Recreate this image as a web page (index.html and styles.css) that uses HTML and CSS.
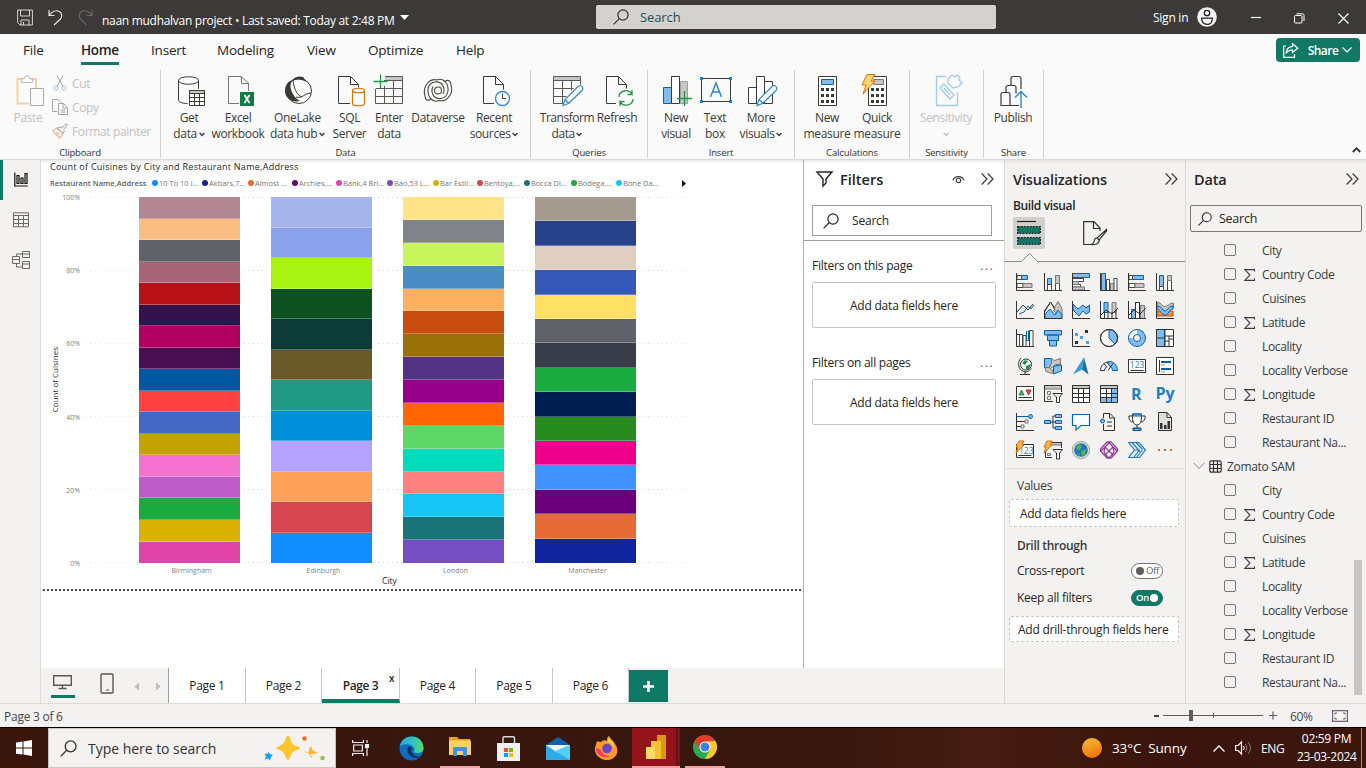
FILE: index.html
```html
<!DOCTYPE html>
<html lang="en">
<head>
<meta charset="utf-8">
<title>naan mudhalvan project</title>
<link rel="stylesheet" href="styles.css">
</head>
<body>
<svg class="defs" width="0" height="0">
  <symbol id="cb" viewBox="0 0 12 12"><rect x=".5" y=".5" width="11" height="11" rx="1.5" fill="none" stroke="#797775"/></symbol>
  <symbol id="sg" viewBox="0 0 11 12"><path d="M10.500 2.500V.6H.8L6 6 .8 11.400h9.700V9.500" fill="none" stroke="#3b3a39" stroke-width="1.100"/></symbol>
  <symbol id="dd" viewBox="0 0 6 5"><path d="M.6 1l2.400 2.500L5.400 1" fill="none" stroke="currentColor" stroke-width="1.400"/></symbol>
  <symbol id="mag" viewBox="0 0 16 16"><circle cx="10" cy="6" r="5.100" fill="none" stroke="currentColor" stroke-width="1.200"/><path d="M6.300 9.700L.6 15.400" stroke="currentColor" stroke-width="1.200"/></symbol>
  <symbol id="chev" viewBox="0 0 13 12"><path d="M.7.500L6 6 .7 11.500M6.700.500L12 6l-5.300 5.500" fill="none" stroke="#3b3a39" stroke-width="1.200"/></symbol>
</svg>

<header class="titlebar">
  <div class="quick">
    <svg width="16" height="17" viewBox="0 0 16 17" fill="none" stroke="#d6d5d4"><path d="M.6 1h14.800v15H3L.6 13.600zM3.500 1v6h9V1M4 16v-5h8v5M6.500 13v3"/></svg>
    <svg width="15" height="17" viewBox="0 0 15 17" fill="none" stroke="#e6e5e4" stroke-width="1.200"><path d="M1 1v5.500h5.500M1.300 6.200C4 2.500 8 .8 11 2.300c3.500 2 3.500 5.500 1.200 8L6 16"/></svg>
    <svg width="15" height="17" viewBox="0 0 15 17" fill="none" stroke="#6a6967" stroke-width="1.200"><path d="M14 1v5.500H8.500M13.700 6.200C11 2.500 7 .8 4 2.300c-3.500 2-3.500 5.500-1.200 8L8.500 16"/></svg>
  </div>
  <div class="doc">naan mudhalvan project • Last saved: Today at 2:48 PM</div>
  <svg class="doc-arrow" width="9" height="5"><path d="M0 0h9L4.500 5z" fill="#fff"/></svg>
  <div class="topsearch"><svg width="16" height="16"><use href="#mag"/></svg><span>Search</span></div>
  <div class="account"><span>Sign in</span>
    <svg width="20" height="20" viewBox="0 0 20 20"><circle cx="10" cy="10" r="9.800" fill="#f6f6f6"/><circle cx="10" cy="6" r="2.700" fill="none" stroke="#222" stroke-width="1.300"/><path d="M4.700 11.200h10.600c0 4-2 6.200-5.300 6.200s-5.300-2.200-5.300-6.200z" fill="none" stroke="#222" stroke-width="1.300"/></svg>
  </div>
  <div class="winbtns">
    <svg width="10" height="10"><path d="M0 4.500h10" stroke="#fff" stroke-width="1.200"/></svg>
    <svg width="11" height="11" fill="none" stroke="#fff"><path d="M.5 3.500q0-1 1-1H7q1 0 1 1V9q0 1-1 1H1.500q-1 0-1-1zM2.500.8H8.500Q10 .8 10 2.500V8"/></svg>
    <svg width="11" height="11"><path d="M.5.500l10 10M10.500.500l-10 10" stroke="#fff" stroke-width="1.200"/></svg>
  </div>
</header>

<nav class="menu">
  <span class="m-file">File</span><span class="m-home">Home</span><span class="m-insert">Insert</span><span class="m-model">Modeling</span><span class="m-view">View</span><span class="m-opt">Optimize</span><span class="m-help">Help</span>
  <button class="share"><svg width="16" height="15" viewBox="0 0 16 15" fill="none" stroke="#fff" stroke-width="1.200"><path d="M3 3H.7v11.300h10.800V11M9.500.8l5.300 4.400-5.300 4.300V7.200C6.500 7 4.500 8 3 10.500 3.200 6.500 5.500 3.700 9.500 3.300z"/></svg><span>Share</span><svg width="10" height="6"><path d="M.5.500L5 5 9.500.500" fill="none" stroke="#fff" stroke-width="1.200"/></svg></button>
</nav>

<section class="ribbon">
  <div class="group g-clip">
    <div class="items">
      <div class="rb w56 off"><svg width="36" height="36" viewBox="0 0 36 36" fill="none"><path d="M13 5H7.500v24.500H19M21 5h5v9" stroke="#f3d3a5" stroke-width="2"/><path d="M11.500 8.500V4.500h3q0-3 2.500-3t2.500 3h3v4z" stroke="#bbb"/><path d="M20.500 14.500h13v17h-13z" stroke="#aaa" fill="#fafafa"/></svg><b>Paste</b></div>
      <div class="cliplist off">
        <div><svg width="16" height="16" viewBox="0 0 16 16" fill="none" stroke="#a5a5a5"><path d="M5 .5l6 11M11 .5l-6 11"/><circle cx="4" cy="13" r="2" stroke="#9ac6e2"/><circle cx="12" cy="13" r="2" stroke="#9ac6e2"/></svg>Cut</div>
        <div><svg width="16" height="16" viewBox="0 0 16 16" fill="none" stroke="#a5a5a5"><path d="M5 12.500H.5V.5H6l3 3M6.500 4.500h5l4 4v7h-9zM11 4.500V9h4.500M8.500 11h5M8.500 13h5"/></svg>Copy</div>
        <div><svg width="16" height="16" viewBox="0 0 16 16" fill="none"><path d="M.8 8l7 7 3.200-4.500-6-5.500zM4 10l4 1" stroke="#efc0a0" stroke-width="1.500"/><path d="M5 5.500L8 4l2 1 4-4.500L15.500 2 11.500 6.500l1 1.500-1.500 2z" stroke="#a5a5a5"/></svg>Format painter</div>
      </div>
    </div>
    <div class="gname">Clipboard</div>
  </div>
  <div class="group g-data">
    <div class="items">
      <div class="rb w46"><svg width="36" height="36" viewBox="0 0 36 36" fill="none" stroke="#3b3a39"><path d="M27.500 15V6.500M7.500 6.500V26c0 2 4 3.500 9 3.500M7.500 6.500c0-5 20-5 20 0s-20 5-20 0z"/><path d="M18.500 16.500h15v15h-15z" fill="#fff"/><path d="M18.500 16.500h15v3h-15z" fill="#c8c6c4"/><path d="M23.500 19.500v12M28.500 19.500v12M18.500 23.500h15M18.500 27.500h15"/></svg><b>Get<br>data <svg class="dd"><use href="#dd"/></svg></b></div>
      <div class="rb w52"><svg width="36" height="36" viewBox="0 0 36 36" fill="none"><path d="M19 29.500H8.500v-27H21L28.500 9v8M21.500 2.500V9.500h7" stroke="#797775"/><path d="M20 18h14v14H20z" fill="#107c41"/><path d="M24.500 21l5 8M29.500 21l-5 8" stroke="#fff" stroke-width="1.800"/></svg><b>Excel<br>workbook</b></div>
      <div class="rb w67"><svg width="36" height="36" viewBox="0 0 36 36"><circle cx="19" cy="17" r="12.500" fill="#fafafa" stroke="#3b3a39"/><path d="M13 6C10 9 10 13 11.500 17s5 8.500 8.500 10C12 29 5 24 5 17 5 11 8 7 13 6zM12 6Q17 1 23 3l4 5q-8-4.500-15-1z" fill="#3b3a39"/><path d="M13 6c1 10 5 16 9 17M16 23c6 2 9-4 15-4" fill="none" stroke="#3b3a39"/></svg><b>OneLake<br>data hub <svg class="dd"><use href="#dd"/></svg></b></div>
      <div class="rb w37"><svg width="36" height="36" viewBox="0 0 36 36" fill="none"><path d="M18 29.500H6.500v-27h12l8 8v3M18.500 2.500v8h8" stroke="#3b3a39"/><path d="M20.500 16.500v13c0 3 12 3 12 0v-13c0-3-12-3-12 0zc0 3 12 3 12 0" stroke="#d9730d" stroke-width="1.200"/></svg><b>SQL<br>Server</b></div>
      <div class="rb w42"><svg width="36" height="36" viewBox="0 0 36 36" fill="none"><path d="M14 2.500h17.500v4H14z" fill="#c8c6c4"/><path d="M14 2.500h17.500v27h-27V15M13 6.500h18.500M5 14.500h26.500M5 22.500h26.500M13.500 12v17.500M22.500 6.500v23" stroke="#5a5856"/><path d="M9.500.5v14M2.500 7.500h14" stroke="#1a9b45" stroke-width="1.300"/></svg><b>Enter<br>data</b></div>
      <div class="rb w56"><svg width="36" height="36" viewBox="0 0 36 36" fill="none" stroke="#4a4846" stroke-width="1.100"><path d="M5 22C2 12 10 4 17 6M31 11c3 10-5 17-12 15.500M5 22c0 4 3 5.500 6 3C6 19 7 9 15 8c7-1 11 6 8 12M31 11c0-4-3-6-6-3.500C30 13 29 23 21 24.500c-7 1-11-6-8-12M17 6q4-2 8 1.500M19 26.500q-4 2-8-1.500"/><circle cx="18" cy="16.500" r="3.500"/></svg><b>Dataverse</b></div>
      <div class="rb w56"><svg width="36" height="36" viewBox="0 0 36 36" fill="none"><path d="M18 29.500H7.500v-27h12l8 8v5M19.500 2.500v8h8" stroke="#3b3a39"/><circle cx="26.500" cy="24.500" r="7" fill="#fff" stroke="#2b88d8" stroke-width="1.300"/><path d="M26.500 19.500v5H30" stroke="#3b3a39"/></svg><b>Recent<br>sources <svg class="dd"><use href="#dd"/></svg></b></div>
    </div>
    <div class="gname">Data</div>
  </div>
  <div class="group g-quer">
    <div class="items">
      <div class="rb w62"><svg width="36" height="36" viewBox="0 0 36 36" fill="none"><path d="M4.500 2.500h27v4h-27z" fill="#c8c6c4"/><path d="M14 29.500H4.500v-27h27v8M4.500 6.500h27M4.500 14.500h20M4.500 22.500h13M13.500 6.500v23M22.500 6.500v10" stroke="#5a5856"/><path d="M14 31.500l2-6L29 12.500q2.500-2 4 0t0 4L19.500 29.500zM16 25.500l4 4" fill="#fff" stroke="#2b88d8" stroke-width="1.200"/></svg><b>Transform<br>data <svg class="dd"><use href="#dd"/></svg></b></div>
      <div class="rb w38"><svg width="36" height="36" viewBox="0 0 36 36" fill="none"><path d="M17 29.500H7.500v-27h12l8 8v4M19.500 2.500v8h8" stroke="#3b3a39"/><path d="M20 23c0-6 9-9 13-3v-4M33 20.500h-4.500M34 25c0 6-9 8.500-13 3v4M21 27.500h4.500" stroke="#2a9248" stroke-width="1.300"/></svg><b>Refresh</b></div>
    </div>
    <div class="gname">Queries</div>
  </div>
  <div class="group g-ins">
    <div class="items">
      <div class="rb w42"><svg width="36" height="36" viewBox="0 0 36 36"><path d="M22.500 7.500h7v22h-7z" fill="#c8c6c4" stroke="#a19f9d"/><path d="M5.500 13.500h8v16h-8z" fill="#83bbec" stroke="#0063b1"/><path d="M13.500 2.500h8v27h-8z" fill="#fff" stroke="#3b3a39"/><path d="M26.500 17v15M19 24.500h15" stroke="#1a9b45" stroke-width="1.400"/></svg><b>New<br>visual</b></div>
      <div class="rb w36"><svg width="36" height="36" viewBox="0 0 36 36"><path d="M4.500 4.500h29v23h-29z" fill="none" stroke="#3b3a39"/><path d="M3 3h3v3H3zM32 3h3v3h-3zM3 26h3v3H3zM32 26h3v3h-3z" fill="#0f7fd0"/><path d="M13.500 23L19 9l5.500 14M15.500 18h7" fill="none" stroke="#2b88d8" stroke-width="1.500"/></svg><b>Text<br>box</b></div>
      <div class="rb w56"><svg width="36" height="36" viewBox="0 0 36 36" fill="#fff" stroke="#3b3a39"><path d="M5.500 13.500h8v16h-8zM21.500 7.500h8v22h-8zM13.500 2.500h8v27h-8z"/><path d="M14 31.500l2-6L29 12.500q2.500-2 4 0t0 4L19.500 29.500zM16 25.500l4 4" stroke="#2b88d8" stroke-width="1.200"/></svg><b>More<br>visuals <svg class="dd"><use href="#dd"/></svg></b></div>
    </div>
    <div class="gname">Insert</div>
  </div>
  <div class="group g-calc">
    <div class="items">
      <div class="rb w50"><svg width="36" height="36" viewBox="0 0 36 36"><path d="M9.500 2.500h18v29h-18z" fill="#fff" stroke="#3b3a39"/><path d="M12.500 5.500h12v5h-12z" fill="#83bbec" stroke="#0063b1"/><path d="M12 14h3v3h-3zm5 0h3v3h-3zm5 0h3v3h-3zm-10 6h3v3h-3zm5 0h3v3h-3zm5 0h3v3h-3zm-10 6h3v3h-3zm5 0h3v3h-3zm5 0h3v3h-3z" fill="#3b3a39"/></svg><b>New<br>measure</b></div>
      <div class="rb w50"><svg width="36" height="36" viewBox="0 0 36 36"><path d="M9.500 2.500h18v29h-18z" fill="#fff" stroke="#3b3a39"/><path d="M14.500 5.500h10v5h-10z" fill="#c8c6c4" stroke="#797775"/><path d="M12 14h3v3h-3zm5 0h3v3h-3zm5 0h3v3h-3zm-10 6h3v3h-3zm5 0h3v3h-3zm5 0h3v3h-3zm-10 6h3v3h-3zm5 0h3v3h-3zm5 0h3v3h-3z" fill="#3b3a39"/><path d="M8 .5h8L12 7h4L4 20l3-9H3z" fill="#fbd46b" stroke="#d9730d"/></svg><b>Quick<br>measure</b></div>
    </div>
    <div class="gname">Calculations</div>
  </div>
  <div class="group g-sens">
    <div class="items">
      <div class="rb w50 off"><svg width="36" height="36" viewBox="0 0 36 36" fill="none" stroke="#9fcdea" stroke-width="1.300"><path d="M18 2.500H8.500v29h21V18M12 14l4-4 10 11-4 4zM16 14l6 7M20 9l5 5 5-1 4-4-3-3 1-2-3-3-2 2-3-2-4 4z"/></svg><b>Sensitivity<br><svg class="dd"><use href="#dd"/></svg></b></div>
    </div>
    <div class="gname">Sensitivity</div>
  </div>
  <div class="group g-share">
    <div class="items">
      <div class="rb w50"><svg width="36" height="36" viewBox="0 0 36 36" fill="none" stroke="#3b3a39" stroke-width="1.200"><path d="M16 11V4.500q0-2 2-2h6q2 0 2 2V15M11 18.500v-5q0-2 2-2h6q2 0 2 2v6M6 31.500V20q0-1.500 2-1.500h5q2 0 2 1.500v11.500zM15 31.500h9"/><path d="M26 34V17.500M20 23.500l6-6 6 6" stroke="#2b88d8" stroke-width="1.400"/></svg><b>Publish</b></div>
    </div>
    <div class="gname">Share</div>
  </div>
  <svg class="collapse" width="9" height="6"><path d="M.8 5L4.500 1.200 8.200 5" fill="none" stroke="#323130" stroke-width="1.800"/></svg>
</section>

<main class="work">
  <aside class="rail">
    <div class="railbtn on"><svg width="14" height="16" viewBox="0 0 14 16" fill="none" stroke="#111" stroke-width="1.200"><path d="M.8.500V14H13.800M3 11.500V3.500H5V11.500zM7 11.500V6H9V11.500zM11 11.500V1.500H13V11.500z"/></svg></div>
    <div class="railbtn"><svg width="16" height="16" viewBox="0 0 16 16" fill="none" stroke="#6b6967"><path d="M.5.800h15v14H.5zM.5 3.500h15M.5 7.500h15M.5 11.500h15M5.500 3.500v11M10.500 3.500v11"/></svg></div>
    <div class="railbtn"><svg width="18" height="18" viewBox="0 0 18 18" fill="none" stroke="#6b6967"><path d="M.5 5.500h7v7h-7zM.5 8.500h7M10.500.500h7v6h-7zM10.500 3h7M10.500 10.500h7v7h-7zM10.500 13h7M4.500 5.500V3h6M4.500 12.500V16h6"/></svg></div>
  </aside>
  <div class="mid">
    <div class="upper">
      <section class="canvas">
        <div class="visual">
          <h2>Count of Cuisines by City and Restaurant Name,Address</h2>
          <div class="legend"><b>Restaurant Name,Address</b>
            <span style="width:50px"><i style="background:#118dff"></i>10 To 10 I...</span><span style="width:46px"><i style="background:#12239e"></i>Akbars,7...</span><span style="width:44px"><i style="background:#e66c37"></i>Almost ...</span><span style="width:44px"><i style="background:#6b007b"></i>Archies,...</span><span style="width:51px"><i style="background:#e044a7"></i>Bank,4 Bri...</span><span style="width:46px"><i style="background:#744ec2"></i>Bao,53 L...</span><span style="width:44px"><i style="background:#d9b300"></i>Bar Estil...</span><span style="width:47px"><i style="background:#d64550"></i>Bentoya,...</span><span style="width:47px"><i style="background:#197278"></i>Bocca Di...</span><span style="width:45px"><i style="background:#1aab40"></i>Bodega,...</span><span style="width:66px"><i style="background:#15c6f4"></i>Bone Da...</span>
            <svg width="4" height="7"><path d="M0 0l4 3.500L0 7z" fill="#111"/></svg>
          </div>
          <div class="plot">
            <div class="ytitle"><span>Count of Cuisines</span></div>
            <div class="yaxis"><span>100%</span><span>80%</span><span>60%</span><span>40%</span><span>20%</span><span>0%</span></div>
            <div class="area">
              <div class="lines"><i></i><i></i><i></i><i></i><i></i><i></i></div>
              <div class="bars">
                <div><i style="background:#b38694"></i><i style="background:#fabe82"></i><i style="background:#5f6269"></i><i style="background:#a66678"></i><i style="background:#b81218"></i><i style="background:#34124e"></i><i style="background:#b50063"></i><i style="background:#470f52"></i><i style="background:#0057a2"></i><i style="background:#ff4141"></i><i style="background:#4668c5"></i><i style="background:#c4a200"></i><i style="background:#f472d0"></i><i style="background:#be5dc9"></i><i style="background:#1aab40"></i><i style="background:#d9b300"></i><i style="background:#e044a7"></i></div>
                <div><i style="background:#a5b5eb"></i><i style="background:#8ba2ec"></i><i style="background:#a9f312"></i><i style="background:#0c511f"></i><i style="background:#0d3c38"></i><i style="background:#6a5929"></i><i style="background:#209a84"></i><i style="background:#0090d9"></i><i style="background:#b5a1ff"></i><i style="background:#fea057"></i><i style="background:#d64550"></i><i style="background:#118dff"></i></div>
                <div><i style="background:#fee388"></i><i style="background:#80838a"></i><i style="background:#c9f55c"></i><i style="background:#4a8dc5"></i><i style="background:#feb05e"></i><i style="background:#c84d0e"></i><i style="background:#9b7009"></i><i style="background:#533285"></i><i style="background:#970089"></i><i style="background:#ff6500"></i><i style="background:#5cd667"></i><i style="background:#00dbbc"></i><i style="background:#ff8080"></i><i style="background:#15c6f4"></i><i style="background:#197278"></i><i style="background:#744ec2"></i></div>
                <div><i style="background:#a59a8e"></i><i style="background:#27418a"></i><i style="background:#dfcfc0"></i><i style="background:#3557b8"></i><i style="background:#fee164"></i><i style="background:#5f6269"></i><i style="background:#383d49"></i><i style="background:#1aab40"></i><i style="background:#001e50"></i><i style="background:#268a1e"></i><i style="background:#ec008c"></i><i style="background:#4092ff"></i><i style="background:#6b007b"></i><i style="background:#e66c37"></i><i style="background:#12239e"></i></div>
              </div>
            </div>
          </div>
          <div class="xaxis"><span>Birmingham</span><span>Edinburgh</span><span>London</span><span>Manchester</span></div>
          <div class="xtitle">City</div>
        </div>
        <div class="pageedge"></div>
      </section>
      <section class="filters">
        <div class="fhead"><svg width="17" height="16" viewBox="0 0 17 16"><path d="M1 1h15l-6 7v4l-3 3V8z" fill="none" stroke="#252423" stroke-width="1.400"/></svg><h3>Filters</h3>
          <svg class="eye" width="13" height="9" viewBox="0 0 14 10" fill="none" stroke="#3b3a39" stroke-width="1.300"><path d="M.8 6C3 .500 11 .500 13.200 6"/><circle cx="7" cy="6" r="2.400"/></svg>
          <svg width="13" height="12"><use href="#chev"/></svg></div>
        <div class="fsearch"><svg width="16" height="16"><use href="#mag"/></svg>Search</div>
        <div class="fbody">
          <div class="frow">Filters on this page<em>...</em></div><div class="fdrop">Add data fields here</div>
          <div class="frow two">Filters on all pages<em>...</em></div><div class="fdrop">Add data fields here</div>
        </div>
      </section>
    </div>
    <div class="tabs">
      <div class="modes">
        <svg class="desk" width="24" height="28" viewBox="0 0 24 28"><path d="M2.700 3.700h17.600v9.600H2.700zM11.500 13v3M7.500 16.500h8" fill="none" stroke="#5a5856" stroke-width="1.400"/><path d="M0 24.500h24" stroke="#117865" stroke-width="3"/></svg>
        <svg class="phone" width="14" height="21" viewBox="0 0 14 21"><rect x="1" y="1" width="12" height="19" rx="1" fill="none" stroke="#5a5856" stroke-width="1.400"/><path d="M6 17h3" stroke="#5a5856"/></svg>
        <svg class="prev" width="5" height="9"><path d="M5 .5v8L.5 4.500z" fill="#bebbb8"/></svg>
        <svg width="5" height="9"><path d="M0 .5v8l4.500-4z" fill="#bebbb8"/></svg>
      </div>
      <div class="tab">Page 1</div><div class="tab">Page 2</div><div class="tab cur">Page 3<sup>x</sup></div><div class="tab">Page 4</div><div class="tab">Page 5</div><div class="tab">Page 6</div>
      <div class="add"><svg width="11" height="11"><path d="M5.500 0v11M0 5.500h11" stroke="#fff" stroke-width="2.600"/></svg></div>
    </div>
  </div>
  <section class="viz">
    <div class="phead"><h3>Visualizations</h3><svg width="13" height="12"><use href="#chev"/></svg></div>
    <div class="build">Build visual</div>
    <div class="modesel">
      <div class="msel"><svg width="24" height="26" viewBox="0 0 24 26"><path d="M0 1.500h19" stroke="#252423" stroke-width="1.200"/><path d="M.7 6.700h22.600v6.600H.7zM.7 17.700h22.600v6.600H.7z" fill="#117865" stroke="#252423" stroke-width="1.300" stroke-dasharray="2 1"/></svg></div>
      <svg width="24" height="25" viewBox="0 0 24 25" fill="none" stroke="#323130" stroke-width="1.200"><path d="M8 23.500H.7V.7H11L17 7v3M10.500 1v6.500H17"/><path d="M23.500 8.500L14 17l2 2 7.500-9zM13.500 17c-2 0-2 2-2.500 4-.5 1-1 2-3 2.500 4 .5 8-.5 8.500-4.500z" fill="#fff"/></svg>
    </div>
    <svg class="notch" width="180" height="10"><path d="M0 9.500H16.500L24.500 1.500l8 8H180" fill="none" stroke="#8a8886"/></svg>
    <div class="gallery">
      <svg viewBox="0 0 18 18"><path d="M5.500 2.500h6v4h-6z" class="bl"/><path d="M1 2.500h4.500v4H1zM1 10.500h6v4H1z" class="wh"/><path d="M7 10.500h9v4H7z" class="gr"/><path d="M.5 0v17.500H18" class="dk"/></svg>
      <svg viewBox="0 0 18 18"><path d="M3.500 5.500h4v6h-4z" class="bl"/><path d="M3.500 11.500h4v6h-4zM11.500 10.500h4v7h-4z" class="wh"/><path d="M11.500 2.500h4v8h-4z" class="gr"/><path d="M.5 0v17.500H18" class="dk"/></svg>
      <svg viewBox="0 0 18 18"><path d="M.5.500h17v4H.5z" class="bl"/><path d="M.5 5.500h11v3H.5zM.5 11.500h8v2.500H.5z" class="wh"/><path d="M.5 8.500h6v3h-6zM.5 14h12v3H.5z" class="gr"/><path d="M.5 0v17.500H18" class="dk"/></svg>
      <svg viewBox="0 0 18 18"><path d="M1.500.500h4v17h-4z" class="bl"/><path d="M6.500 6.500h3v11h-3zM14 5.500h3v12h-3z" class="wh"/><path d="M10.500 10.500h3v7h-3z" class="gr"/><path d="M.5 0v17.500H18" class="dk"/></svg>
      <svg viewBox="0 0 18 18"><path d="M4.500 2.500h11v4h-11z" class="bl"/><path d="M1 2.500h3.500v4H1zM1 10.500h6v4H1z" class="wh"/><path d="M7 10.500h9v4H7z" class="gr"/><path d="M.5 0v17.500H18" class="dk"/></svg>
      <svg viewBox="0 0 18 18"><path d="M3.500 2.500h4v11h-4z" class="bl"/><path d="M3.500 13.500h4v4h-4zM11.500 7.500h4v10h-4z" class="wh"/><path d="M11.500 2.500h4v5h-4z" class="gr"/><path d="M.5 0v17.500H18" class="dk"/></svg>

      <svg viewBox="0 0 18 18"><path d="M3 13l5-2 4-6 3 3 3-4" class="st"/><path d="M1 11l6-7 5 5 5-6" class="dk"/><path d="M.5 0v17.500H18" class="dk"/></svg>
      <svg viewBox="0 0 18 18"><path d="M9 9l5-8.500 4 7v10z" class="gr"/><path d="M1 9l5.500-8L11 9" class="wh"/><path d="M1 17.500V13l5-5 5 6 3-5 4 5v3.500z" class="bl"/><path d="M.5 11L6.500 1l4 6M.5 9v8.500H18" class="dk"/></svg>
      <svg viewBox="0 0 18 18"><path d="M1 3l5 5 5-4 3 3 3.500-3v7L14 13l-3-3-4 5-6-6z" class="bl"/><path d="M.5 0v17.500H18" class="dk"/></svg>
      <svg viewBox="0 0 18 18"><path d="M4 1.500h4v10H4z" class="bl"/><path d="M12 1.500h4v10h-4z" class="gr"/><path d="M.5 0v17.500H18M4.500 11v6M8 10v7M12 11v6M16 9v8M1 14l5-5 6 4 6-6" class="dk"/></svg>
      <svg viewBox="0 0 18 18"><path d="M3.500 8.500h4v9h-4z" class="bl"/><path d="M12.500 4.500h4v13h-4z" class="gr"/><path d="M7.500 1.500h4v16h-4z" class="wh"/><path d="M.5 0v17.500H18M7.500 17V1.500h4V17M1 14l5-5 6 4 6-6" class="dk"/></svg>
      <svg viewBox="0 0 18 18"><path d="M1 10h4l4 4 4-4h4v5H1z" fill="#f2903a" stroke="#c84d0e"/><path d="M2 1.500c3 0 4 4 7 4s4-3 7-3.500h1.500v5C13 8 12 11 9 11S5 8 1 7V2z" class="gr"/><path d="M2 5c4 0 4 5 7 5s3-5 8-5v3c-4 0-4 6-8 6s-4-5-8-6V5z" class="bl"/><path d="M.5 0v17.500H18" class="dk"/></svg>

      <svg viewBox="0 0 18 18"><path d="M3.500 5.500h3v12h-3zM7 6.500h3v11H7zM13.500 1.500h3.500v16h-3.500z" fill="#fff" stroke="#484644"/><path d="M10.500 2v9.500h2V1.500" class="st"/><path d="M.5 0v17.500H18M1 5.500h3" class="dk"/></svg>
      <svg viewBox="0 0 18 18"><path d="M.5 1.500h17v4.500H.5zM3.500 6h11v5.500h-11zM5.500 11.500h7v5.500h-7z" class="bl"/></svg>
      <svg viewBox="0 0 18 18"><path d="M.5 0v17.500H18" class="dk"/><path d="M13 1h3v3h-3zM3 12h3v3H3z" fill="#323130"/><path d="M3 4h3v3H3zM8 7h3v3H8zM14 12h3v3h-3z" fill="#4fa3e0"/></svg>
      <svg viewBox="0 0 18 18"><circle cx="9" cy="9" r="8.500" class="wh"/><path d="M9 .5A8.500 8.500 0 0 1 15 15L9 9z" class="bl"/><circle cx="9" cy="9" r="8.500" class="dk"/></svg>
      <svg viewBox="0 0 18 18"><circle cx="9" cy="9" r="6" fill="none" stroke="#83bbec" stroke-width="4.500"/><path d="M9 3A6 6 0 0 0 3 9" fill="none" stroke="#fff" stroke-width="4.500"/><circle cx="9" cy="9" r="8.500" class="st"/><circle cx="9" cy="9" r="3.500" class="st"/></svg>
      <svg viewBox="0 0 18 18"><path d="M9 .5h8.500v17H9z" fill="#fff"/><path d="M.5.500h8v17h-8z" class="bl"/><path d="M.5.500h17v17H.5zM9 0v17.500M0 9h9M9 7h8M13 7v10M9 12h4M13 10h4" class="dk"/></svg>

      <svg viewBox="0 0 18 18"><circle cx="10" cy="7.500" r="5.500" fill="#fff" stroke="#323130"/><path d="M6 6l3-3 3 1-3 4zM10 9l5-2-2 5-3 0z" fill="#218d51"/><path d="M5 1C1 5 2 13 8 14.500c3 1 6-1 7.500-3M9 15v2.500M4 17.500h10" class="dk"/></svg>
      <svg viewBox="0 0 18 18"><path d="M.5 1.500h7v6l-2 3h-5z" class="bl"/><path d="M7.500 1.500l3 2 6-2v6h-5l-3 3-3-1 2-3zM1 10.500h4l4 3-1 3-6-2z" class="gr"/><path d="M10 9l7.500-1v6L9.500 17V12z" class="bl"/></svg>
      <svg viewBox="0 0 18 18"><path d="M12 0L1 17.500l9-5z" fill="#3b9ad9"/><path d="M12 0l4.500 17.500-6.500-5z" fill="#1b71ad"/></svg>
      <svg viewBox="0 0 18 18"><path d="M7 5.500c5-3 10.500 2 10.500 8h-5q0-3-2-3.500z" class="bl"/><path d="M.5 13.500C.5 9 4 5 9 5M.5 13.500h4q0-2.500 2-3.500M8 13.500l5-7M4 6.500l3 4" class="dk"/></svg>
      <svg viewBox="0 0 18 18"><path d="M.5 2.500h17v13H.5zM2.500 13.500h13" fill="#fff" class="bx"/><text x="1.800" y="11.200">123</text></svg>
      <svg viewBox="0 0 18 18"><path d="M.5.500h17v17H.5z" fill="#fff" class="bx"/><path d="M3.500 3v12" class="dk"/><path d="M5 5h10M5 12h10" stroke="#0063b1" stroke-width="2"/><path d="M5 8h4M5 15h4" stroke="#999"/></svg>

      <svg viewBox="0 0 18 18"><path d="M.5 1.500h17v14H.5zM2.500 12.500h13" fill="#fff" class="bx"/><path d="M3 10l2.500-5L8 10z" fill="#52a76a" stroke="#218d51"/><path d="M10 5h5l-2.500 5z" fill="#e94e4e" stroke="#c22"/></svg>
      <svg viewBox="0 0 18 18"><path d="M.5.500h17V4H.5z" class="gr"/><path d="M9 16.500H.5V.500h17V7" class="dk"/><path d="M3.500 6.500h3v3h-3zM3.500 11.500h3v3h-3z" fill="none" stroke="#797775"/><path d="M9 8.500h9.500L15.500 12v5.500h-3V12z" fill="#fff" stroke="#323130"/></svg>
      <svg viewBox="0 0 18 18"><path d="M.5.500h17v17H.5z" fill="#fff"/><path d="M.5.500h17v3H.5z" class="gr"/><path d="M.5.500h17v17H.5zM.5 3.500h17M.5 8.500h17M.5 12.500h17M6.500 3.500v14M11.500 3.500v14" class="dk"/></svg>
      <svg viewBox="0 0 18 18"><path d="M.5.500h17v17H.5z" fill="#fff"/><path d="M12 3.500h6v14H1v-5h11z" fill="#83bbec"/><path d="M.5.500h17v3H.5z" class="gr"/><path d="M.5.500h17v17H.5zM.5 3.500h17M.5 8.500h17M.5 12.500h17M6.500 3.500v14M11.500 3.500v14" class="dk"/></svg>
      <svg viewBox="0 0 18 18"><text x="3" y="15" class="letter">R</text></svg>
      <svg viewBox="0 0 18 18"><text x="-.5" y="14" class="letter py">Py</text></svg>

      <svg viewBox="0 0 18 18"><path d="M1 3.500h12" class="st"/><circle cx="14.500" cy="3.500" r="2" class="bl"/><path d="M1 8.500h8M1 13.500h4" class="dk"/><path d="M9 7h3v3H9zM5 12h3v3H5z" fill="#eee" stroke="#797775"/><path d="M.5 0v17.500H18" class="dk"/></svg>
      <svg viewBox="0 0 18 18"><path d="M6 9h6M9 3v12M9 3h3M9 15h3" class="dk"/><path d="M.5 7.500h6v3h-6zM11.500 1.500h6v3h-6zM11.500 7.500h6v3h-6zM11.500 13.500h6v3h-6z" class="bl"/></svg>
      <svg viewBox="0 0 18 18"><path d="M.5 1.500h17v11H9l-5 4.500v-4.500H.5z" fill="#fff" stroke="#0063b1" stroke-width="1.200"/></svg>
      <svg viewBox="0 0 18 18"><path d="M3.500 5V.500H10L14.500 5v12.500h-11V11M9.500.500V5h5M7 9h5M7 13h5" fill="none" class="bx"/><circle cx="2.500" cy="8" r="2" class="bl"/></svg>
      <svg viewBox="0 0 18 18"><path d="M4.500 1C4 9 6 12 9 12s5-3 4.500-11zM4.500 3H.8q0 6 4.700 6M13.500 3h3.700q0 6-4.700 6M9 12v3M5 17.500V15h8v2.500z" fill="#fff" class="bx"/><path d="M5 1h8.500v2H5zM6 15.500h6v2H6z" class="bl"/></svg>
      <svg viewBox="0 0 18 18"><path d="M2.500-.500H11l4.500 5v13h-13zM11-.500v5h4.500" fill="#e1dfdd" class="bx"/><path d="M4 10h2.500v6H4zM8 12h2.500v4H8zM11.500 8H14v8h-2.500z" fill="#323130"/></svg>

      <svg viewBox="0 0 18 18"><path d="M.5 3.500h17v13H.5zM2.500 14.500h13" fill="#fff" class="bx"/><text x="3" y="12.500">123</text><path d="M3 0h5L6 4h2L0 12l2-6h-2z" fill="#fbb44b" stroke="#d9730d"/></svg>
      <svg viewBox="0 0 18 18"><path d="M5 1.500h12.500V4H5z" class="gr"/><path d="M8 16.500H1.500V10M7 1.500h10.500V7" class="dk"/><path d="M3.500 12.500h3v2h-3z" fill="none" stroke="#797775"/><path d="M9 8.500h9.500L15.500 12v6h-3v-6z" fill="#fff" stroke="#323130"/><path d="M3 0h5L6 4h2L0 12l2-6h-2z" fill="#fbb44b" stroke="#d9730d"/></svg>
      <svg viewBox="0 0 18 18"><circle cx="9" cy="9" r="8.700" fill="#d8d6d4" stroke="#aaa"/><circle cx="9" cy="9" r="6.800" fill="#1d79b5"/><path d="M4 6l4-3 2 3-4 4zM9 10l5-2-1 6-3 1zM5 12l3 1v2z" fill="#5ab05a"/></svg>
      <svg viewBox="0 0 18 18" fill="none" stroke="#8a3a93" stroke-width="1.200"><path d="M7 .8h4L17.500 8v2L11 17.200H7L.5 10V8zM9 1.500L13 6 9 10 5 6zM13 6l4 4M5 6L1 10M9 10l3.500 3.500L9 17l-3.500-3.500zM5 6l-1 5 1.500 2.500M13 6l1 5-1.500 2.500"/></svg>
      <svg viewBox="0 0 18 18" fill="none" stroke="#1a7bd0" stroke-width="1.200"><path d="M.8 1.500H11L17.500 9l-6 7.500H.8L6.500 9zM4 1.500l8 9M8 1.500l6.500 7M6.500 9h5M11.500 9l-6 7.500M14.500 9l-6 7.500"/></svg>
      <svg viewBox="0 0 18 18"><path d="M2 8h2v2H2zM14 8h2v2h-2z" fill="#d9730d"/><path d="M8 8h2v2H8z" fill="#797775"/></svg>
    </div>
    <div class="wells">
      <div class="wl">Values</div>
      <div class="drop">Add data fields here</div>
      <div class="wl drill">Drill through</div>
      <div class="tog"><span>Cross-report</span><span class="sw"><i></i>Off</span></div>
      <div class="tog k"><span>Keep all filters</span><span class="sw onsw">On<i></i></span></div>
      <div class="drop d2">Add drill-through fields here</div>
    </div>
  </section>
  <section class="data">
    <div class="phead"><h3>Data</h3><svg width="13" height="12"><use href="#chev"/></svg></div>
    <div class="dsearch"><svg width="14" height="14" viewBox="0 0 16 16"><use href="#mag"/></svg>Search</div>
    <div class="listwrap">
      <div class="list">
        <div class="f"><svg><use href="#cb"/></svg><s></s>City</div>
        <div class="f"><svg><use href="#cb"/></svg><s><svg><use href="#sg"/></svg></s>Country Code</div>
        <div class="f"><svg><use href="#cb"/></svg><s></s>Cuisines</div>
        <div class="f"><svg><use href="#cb"/></svg><s><svg><use href="#sg"/></svg></s>Latitude</div>
        <div class="f"><svg><use href="#cb"/></svg><s></s>Locality</div>
        <div class="f"><svg><use href="#cb"/></svg><s></s>Locality Verbose</div>
        <div class="f"><svg><use href="#cb"/></svg><s><svg><use href="#sg"/></svg></s>Longitude</div>
        <div class="f"><svg><use href="#cb"/></svg><s></s>Restaurant ID</div>
        <div class="f"><svg><use href="#cb"/></svg><s></s>Restaurant Na...</div>
        <div class="t"><svg width="12" height="8"><path d="M.7 1L6 6.500 11.300 1" fill="none" stroke="#8a8886"/></svg><svg width="13" height="13" viewBox="0 0 13 13"><path d="M2.500.800h8q1.700 0 1.700 1.700v8q0 1.700-1.700 1.700h-8Q.800 12.200.800 10.500v-8Q.800.800 2.500.800zM.800 4.500h11.400M.800 8.500h11.400M4.500.800v11.400M8.500.800v11.400" fill="none" stroke="#323130" stroke-width="1.200"/></svg><span>Zomato SAM</span></div>
        <div class="f"><svg><use href="#cb"/></svg><s></s>City</div>
        <div class="f"><svg><use href="#cb"/></svg><s><svg><use href="#sg"/></svg></s>Country Code</div>
        <div class="f"><svg><use href="#cb"/></svg><s></s>Cuisines</div>
        <div class="f"><svg><use href="#cb"/></svg><s><svg><use href="#sg"/></svg></s>Latitude</div>
        <div class="f"><svg><use href="#cb"/></svg><s></s>Locality</div>
        <div class="f"><svg><use href="#cb"/></svg><s></s>Locality Verbose</div>
        <div class="f"><svg><use href="#cb"/></svg><s><svg><use href="#sg"/></svg></s>Longitude</div>
        <div class="f"><svg><use href="#cb"/></svg><s></s>Restaurant ID</div>
        <div class="f"><svg><use href="#cb"/></svg><s></s>Restaurant Na...</div>
      </div>
      <div class="thumb"></div>
    </div>
  </section>
</main>

<footer class="status">
  <span class="pg">Page 3 of 6</span>
  <svg width="123" height="14" viewBox="0 0 123 14"><path d="M0 7h5" stroke="#484644" stroke-width="2"/><path d="M9 6.500h100M59.500 4v5" stroke="#605e5c"/><path d="M35 1h4v11h-4z" fill="#605e5c"/><path d="M115 6.500h8M119 2.500v8" stroke="#605e5c" stroke-width="1.200"/></svg>
  <span class="zoom">60%</span>
  <svg width="16" height="12" viewBox="0 0 16 12" fill="none" stroke="#605e5c"><path d="M.6.600h14.800v10.800H.6z" stroke="#75607e" stroke-width="1.200"/><path d="M3 4.500V3h2M11 3h2v1.500M3 7.500V9h2M11 9h2V7.500"/></svg>
</footer>

<div class="taskbar">
  <div class="start"><svg width="16" height="16"><path d="M0 2.500L6.500 1.500v6H0zM7.500 1.400L16 0v7.500H7.500zM0 8.500h6.500v6L0 13.700zM7.500 8.500H16V16l-8.500-1.400z" fill="#fff"/></svg></div>
  <div class="tsearch"><svg width="17" height="17"><use href="#mag"/></svg><span>Type here to search</span>
    <svg width="62" height="26" viewBox="0 0 62 26"><path d="M24 1q2 0 3 5 1 4 5 5 4 1 4 2t-4 2.500q-4 1-5.500 5.500Q25 25 24 25t-3-4.500Q20 16.500 15.500 15T12 13t4-2.500Q20 9 21 5q1.500-4 3-4z" fill="#fcc42e"/><path d="M47 11q1 4 2 4.500t3.500 1.500-3.500 2-2 3-2-3-3.500-2 3.500-1.500T47 11z" fill="#fcb52e"/><path d="M4.500 17l1.500 2 3 1-2 2-1 3.500-2-2-3.500 1L2 21.500l-1.500-3 3 .5z" fill="#13a1f0"/><circle cx="40.500" cy="3.500" r="2.200" fill="#f0692b"/><circle cx="58.500" cy="23" r="2.200" fill="#8ac543"/></svg>
  </div>
  <div class="app view"><svg width="17" height="16" viewBox="0 0 17 16" fill="none" stroke="#eee" stroke-width="1.200"><path d="M.6 0v2.500h10.800V0M.6 16v-2.500h10.800V16M1.600 5h8.800v6H1.600zM15 0v3M15 8v8"/><path d="M13.500 4.500h3v3h-3z" fill="#fff"/></svg></div>
  <div class="app edge"><svg width="25" height="25" viewBox="0 0 25 25"><defs><linearGradient id="e1" x1="0" x2="1"><stop offset="0" stop-color="#27a6dd"/><stop offset=".6" stop-color="#32c5c3"/><stop offset="1" stop-color="#5fd45b"/></linearGradient></defs><circle cx="12.500" cy="12.500" r="12" fill="#0f6cbd"/><path d="M1 10C3-3 24-3 24.500 12c0 5-6 6-9 4.500-2-1 1-2-.5-5C13 8 5 7 1 10z" fill="url(#e1)"/><path d="M9 11c-2 6 2 11 10 11 2 0 3-1 4-2-2 1-7 1-9-2-2-2-2-4-1-6-1-1-3-2-4-1z" fill="#16325c"/></svg></div>
  <div class="app run"><svg width="22" height="20" viewBox="0 0 22 20"><path d="M0 0h8l2 2h11v5H0z" fill="#e8a317"/><path d="M0 3.500h22V18H0z" fill="#fdd165"/><path d="M4 19V11q0-1 1-1h12q1 0 1 1v8h-4v-5H8v5z" fill="#3f95d8"/></svg></div>
  <div class="app"><svg width="23" height="25" viewBox="0 0 23 25"><path d="M6 7V2q0-1.200 1.200-1.200h9Q17.500.800 17.500 2v5" fill="none" stroke="#d8d8d8" stroke-width="1.500"/><path d="M0 7h23v18H0z" fill="#eef0f1"/><path d="M7 12h4v4H7z" fill="#f25022"/><path d="M12 12h4v4h-4z" fill="#7fba00"/><path d="M7 17h4v4H7z" fill="#00a4ef"/><path d="M12 17h4v4h-4z" fill="#ffb900"/></svg></div>
  <div class="app"><svg width="24" height="23" viewBox="0 0 24 23"><path d="M0 8l12-8 12 8z" fill="#0f62ad"/><path d="M0 8h24v15H0z" fill="#2faae8"/><path d="M0 8h24l-12 8z" fill="#f1f3f5"/><path d="M24 8v15L9 14z" fill="#4fd0f5"/></svg></div>
  <div class="app"><svg width="23" height="24" viewBox="0 0 23 24"><path d="M3 5c1 1 2 1 3 1 2-2 4-2 6-1 0-2 0-4 2-5 2 4 4 4 6 8 6 8 0 16-8 16S-3 16 1 9q0-3 2-4z" fill="#ff9a2a"/><path d="M1 12c0 8 9 11 15 8-5 0-9-1-10-6z" fill="#f0386b"/><circle cx="12" cy="12.500" r="4.800" fill="#6b44c9"/><path d="M14 1c1 4 6 5 5 11-1-3-3-5-6-6z" fill="#ffdb3a"/></svg></div>
  <div class="app pbi run"><svg width="20" height="24" viewBox="0 0 20 24"><path d="M11 0h9v24h-9z" fill="#d99a12"/><path d="M5 6h10v18H5z" fill="#f2c52e"/><path d="M0 12h9v12H0z" fill="#f8dc6a"/></svg></div>
  <div class="app run chrome"><svg width="24" height="24" viewBox="0 0 24 24"><circle cx="12" cy="12" r="12" fill="#2da94f"/><path d="M1.600 6A12 12 0 0 1 22.400 6L12 7.500 7 15z" fill="#e33b2e"/><path d="M22.400 6A12 12 0 0 1 12 24l5-9-4-8.500z" fill="#fcc72c"/><circle cx="12" cy="12" r="5.600" fill="#fff"/><circle cx="12" cy="12" r="4.500" fill="#3f7fe8"/></svg></div>
  <div class="tray">
    <i class="sun"></i><span class="wx">33°C&nbsp; Sunny</span>
    <svg class="up" width="12" height="7"><path d="M.5 6.500L6 1l5.500 5.500" fill="none" stroke="#fff" stroke-width="1.300"/></svg>
    <svg class="vol" width="17" height="14" viewBox="0 0 17 14" fill="none" stroke="#fff"><path d="M.6 4.500h2.500L6.500 1v12L3.100 9.500H.6z" stroke-width="1.200"/><path d="M8.500 5q1.500 2 0 4"/><path d="M10.500 3q3 4 0 8M13 1q5 6 0 12" stroke="#8d7b76"/></svg>
    <span class="lang">ENG</span><span class="clock">02:59 PM<br>23-03-2024</span><i class="peek"></i>
  </div>
</div>
</body>
</html>
```
FILE: styles.css
```css
* { box-sizing: border-box; }
body { margin: 0; width: 1366px; height: 768px; overflow: hidden; font: 12px "Open Sans", "Noto Sans", sans-serif; letter-spacing: -.25px; color: #252423; white-space: nowrap; display: flex; flex-direction: column; background: #f3f2f1; }
h2, h3 { margin: 0; font-weight: 600; }
svg { flex: none; display: block; overflow: visible; }
.defs { position: absolute; }

.titlebar { height: 34px; background: #3b3a38; color: #fff; display: flex; align-items: center; flex: none; }
.quick { display: flex; gap: 15px; padding-left: 17px; width: 102px; }
.doc { width: 298px; padding-top: 6px; letter-spacing: -.29px; }
.doc-arrow { margin-top: 1px; }
.topsearch { margin-left: 187px; width: 400px; height: 24px; background: #d3d2d0; border-radius: 2px; display: flex; align-items: center; gap: 11px; padding-left: 17px; color: #1d5146; font-size: 13px; letter-spacing: -.1px; }
.topsearch svg { color: #323130; }
.account { margin-left: 157px; width: 98px; display: flex; align-items: center; gap: 10px; }
.account svg { margin-left: -1px; }
.winbtns { display: flex; gap: 33px; align-items: center; padding-top: 2px; }

.menu { height: 36px; background: #fafafa; display: flex; flex: none; padding-left: 23px; font-size: 13.500px; line-height: 32px; letter-spacing: -.2px; }
.menu > span { height: 31px; margin-right: 33px; }
.m-file { width: 25px; } .menu .m-home { width: 38px; font-weight: 600; border-bottom: 3px solid #117865; margin-right: 32px; letter-spacing: -.3px; }
.m-insert { width: 33px; } .m-model { width: 57px; } .m-view { width: 28px; } .m-opt { width: 55px; }
.share { margin: 4px 6px 0 auto; width: 84px; height: 24px; border: 0; border-radius: 4px; background: #117865; color: #fff; font: 600 12px "Open Sans", sans-serif; letter-spacing: -.55px; padding: 0 8px 0 7px; display: flex; align-items: center; justify-content: space-between; }
.share span { margin-left: 5px; }

.ribbon { height: 90px; flex: none; background: #fafafa; display: flex; border-bottom: 1px solid #dcdad8; position: relative; letter-spacing: -.35px; }
.group { height: 88px; border-right: 1px solid #d2d0ce; display: flex; flex-direction: column; }
.items { display: flex; height: 74px; flex: none; }
.g-clip { width: 161px; } .g-data { width: 370px; } .g-data .items { padding-left: 5px; }
.g-quer { width: 117px; } .g-quer .items { padding-left: 5px; }
.g-ins { width: 147px; } .g-ins .items { padding-left: 7px; }
.g-calc { width: 115px; } .g-calc .items { padding-left: 7px; }
.g-sens { width: 74px; } .g-sens .items { padding-left: 11px; }
.g-share { width: 60px; } .g-share .items { padding-left: 4px; }
.gname { text-align: center; font-size: 9.500px; line-height: 14px; margin-top: 2px; margin-bottom: -3px; color: #323130; letter-spacing: -.15px; }
.rb { display: flex; flex-direction: column; align-items: center; padding-top: 4px; flex: none; }
.rb b { font-weight: 400; text-align: center; line-height: 16px; color: #3b3a39; }
.w62 b { letter-spacing: -.45px; }
.dd { width: 6px; height: 5px; display: inline-block; vertical-align: 1px; margin-left: -1px; }
.off, .rb.off b { color: #c3c1bf; }
.w36 { width: 36px; } .w37 { width: 37px; } .w38 { width: 38px; } .w42 { width: 42px; } .w46 { width: 46px; } .w50 { width: 50px; } .w52 { width: 52px; } .w56 { width: 56px; } .w62 { width: 62px; } .w67 { width: 67px; }
.cliplist { margin-left: -4px; padding-top: 1px; }
.cliplist div { height: 24px; display: flex; align-items: center; gap: 4px; }
.collapse { position: absolute; right: 5px; bottom: 6px; }

.work { height: 543px; flex: none; display: flex; }
.rail { width: 41px; border-right: 1px solid #dedcda; background: #f3f2f1; }
.railbtn { height: 40px; display: flex; align-items: center; justify-content: center; border-left: 3px solid transparent; padding-right: 1px; }
.railbtn.on { border-color: #117865; padding-right: 2px; }
.mid { width: 963px; display: flex; flex-direction: column; }
.upper { height: 508px; display: flex; background: #fff; }
.canvas { width: 762px; display: flex; flex-direction: column; box-shadow: inset 0 4px 4px -3px #ddd; }
.visual { height: 429px; padding-left: 9px; color: #7d8488; font-size: 7px; letter-spacing: 0; }
.visual h2 { font-size: 9px; font-weight: 400; color: #252423; line-height: 14px; height: 15px; letter-spacing: .27px; }
.legend { display: flex; align-items: center; height: 16px; font-size: 7.500px; color: #777; letter-spacing: -.02px; }
.legend b { width: 102px; color: #605e5c; font-weight: 600; letter-spacing: .06px; }
.legend span { display: flex; align-items: center; gap: 1px; flex: none; }
.legend i { width: 6px; height: 6px; border-radius: 50%; flex: none; }
.plot { display: flex; height: 366px; margin-top: 6px; }
.ytitle { width: 11px; display: flex; align-items: center; justify-content: center; color: #252423; font-size: 8px; }
.ytitle span { writing-mode: vertical-rl; transform: rotate(180deg); margin-right: 2px; }
.yaxis { width: 19px; display: flex; flex-direction: column; justify-content: space-between; align-items: flex-end; margin: -4px 0 -5px; line-height: 9px; }
.area { display: grid; margin-left: 6px; width: 602px; }
.area > div { grid-area: 1/1; }
.lines { display: flex; flex-direction: column; justify-content: space-between; }
.lines i { height: 1px; background: repeating-linear-gradient(90deg, #e3e3e3 0 1px, transparent 1px 4.500px); }
.bars { display: flex; gap: 31px; padding-left: 53px; }
.bars div { width: 101px; display: flex; flex-direction: column; }
.bars i { flex: 1; box-shadow: inset 0 -1px rgba(255,255,255,.28); }
.bars i:last-child { box-shadow: none; }
.xaxis { display: flex; gap: 31px; padding: 3px 0 0 91px; line-height: 10px; }
.xaxis span { width: 101px; text-align: center; }
.xtitle { color: #252423; font-size: 8.500px; line-height: 10px; width: 679px; text-align: center; }
.pageedge { height: 2px; margin: 0 1px 0 2px; background: repeating-linear-gradient(90deg, #484644 0 2px, transparent 2px 4px); }

.filters { width: 201px; border-left: 1px solid #b3b0ad; letter-spacing: -.2px; box-shadow: inset 0 4px 4px -3px #ddd; }
.fhead { height: 38px; padding: 0 10px 0 12px; display: flex; align-items: center; gap: 7px; }
h3 { font-size: 14.500px; letter-spacing: -.15px; }
.filters h3 { letter-spacing: 0; }
.eye { margin-left: auto; margin-right: 9px; }
.fsearch { width: 180px; height: 31px; margin: 7px 8px 4px; border: 1px solid #a19f9d; display: flex; align-items: center; gap: 13px; padding-left: 10px; }
.fbody { border-top: 1px solid #a19f9d; padding: 16px 8px 0; }
.frow { display: flex; justify-content: space-between; height: 25px; line-height: 18px; width: 182px; letter-spacing: -.25px; }
.frow em { font-style: normal; color: #605e5c; letter-spacing: 1.400px; }
.frow.two { margin-top: 26px; }
.fdrop { width: 184px; height: 46px; border: 1px solid #c8c6c4; border-radius: 2px; text-align: center; line-height: 46px; }

.tabs { height: 35px; display: flex; background: #f3f2f1; }
.modes { width: 128px; padding-left: 10px; display: flex; align-items: flex-start; border-right: 1px solid #a19f9d; }
.modes svg { margin-top: 14px; }
.modes .desk { margin-top: 4px; } .modes .phone { margin: 5px 20px 0 25px; width: 14px; } .modes .prev { margin-right: 17px; }
.tab { width: 77px; background: #fff; border-right: 1px solid #c8c6c4; text-align: center; line-height: 35px; letter-spacing: -.3px; }
.tab:nth-child(3), .tab:nth-child(5), .tab:nth-child(7) { width: 76px; }
.tab.cur { width: 78px; font-weight: 600; border-bottom: 4px solid #117865; position: relative; letter-spacing: -.4px; }
.cur sup { position: absolute; right: 5px; top: 4px; font-size: 10px; line-height: 12px; }
.add { width: 39px; height: 32px; margin-top: 2px; background: #117865; display: flex; align-items: center; justify-content: center; }

.viz { width: 181px; border-left: 1px solid #dcdad8; box-shadow: inset 0 4px 4px -3px #ddd; }
.phead { height: 38px; display: flex; align-items: center; justify-content: space-between; padding: 0 7px 0 8px; }
.build { font-weight: 600; padding-left: 8px; line-height: 16px; height: 19px; letter-spacing: -.35px; }
.modesel { display: flex; gap: 38px; align-items: center; padding-left: 8px; height: 32px; }
.msel { width: 32px; height: 32px; background: #d2d0ce; border-radius: 2px; display: flex; align-items: center; justify-content: center; }
.notch { margin-top: 3px; }
.gallery { display: grid; grid-template-columns: repeat(6, 28px); grid-auto-rows: 28px; padding: 6px 0 0 6px; height: 207px; border-bottom: 1px solid #dcdad8; place-items: center; align-content: start; }
.gallery svg { width: 18px; height: 18px; }
.bl { fill: #83bbec; stroke: #0063b1; } .gr { fill: #c8c6c4; stroke: #797775; } .wh { fill: #fff; stroke: #484644; }
.dk { fill: none; stroke: #323130; } .st { fill: none; stroke: #0063b1; } .bx { stroke: #323130; }
.gallery text { font-size: 8.500px; fill: #1f7fc4; letter-spacing: 0; }
.gallery .letter { font-size: 16px; font-weight: 700; }
.wells { padding: 7px 6px 0 4px; }
.wl { padding-left: 8px; line-height: 20px; height: 23px; color: #3b3a39; }
.drop { height: 28px; border: 1px dashed #c8c6c4; background: #fff; border-radius: 2px; line-height: 28px; padding-left: 10px; letter-spacing: -.3px; }
.drill { margin-top: 9px; height: 20px; font-weight: 600; letter-spacing: -.3px; }
.tog { display: flex; justify-content: space-between; align-items: center; padding: 0 16px 0 8px; height: 27px; margin-top: 1px; }
.tog.k { margin-top: 0; }
.sw { width: 32px; height: 16px; border: 1px solid #797775; border-radius: 8px; background: #fff; display: flex; align-items: center; justify-content: space-between; padding: 0 3px 0 4px; font-size: 9.500px; color: #605e5c; }
.sw i { width: 8px; height: 8px; border-radius: 50%; background: #605e5c; }
.onsw { background: #117865; border-color: #117865; color: #fff; padding: 0 4px; font-weight: 600; }
.onsw i { background: #fff; }
.d2 { height: 26px; line-height: 26px; margin-top: 5px; padding-left: 8px; letter-spacing: -.24px; }

.data { width: 181px; border-left: 1px solid #dcdad8; box-shadow: inset 0 4px 4px -3px #ddd; }
.dsearch { width: 172px; height: 27px; margin: 7px 0 6px 4px; border: 1px solid #797775; border-radius: 2px; display: flex; align-items: center; gap: 7px; padding-left: 7px; font-size: 12.500px; }
.listwrap { display: flex; color: #3b3a39; }
.list { width: 168px; letter-spacing: -.35px; }
.f { display: flex; align-items: center; height: 24px; padding: 1px 0 0 38px; }
.f > svg { width: 12px; height: 12px; margin: -2px 8px 0 0; }
.f s { width: 18px; display: block; } .f s svg { width: 11px; height: 12px; }
.t { display: flex; align-items: center; height: 24px; padding-left: 7px; gap: 4px; } .t span { margin-left: 1px; }
.thumb { width: 8px; height: 135px; margin-top: 322px; background: #c8c6c4; }

.status { height: 24px; flex: none; border-top: 1px solid #dcdad8; display: flex; align-items: center; color: #484644; padding-top: 1px; }
.pg { width: 1154px; padding-left: 4px; }
.zoom { width: 42px; margin: 0 0 0 13px; letter-spacing: -.4px; }

.taskbar { height: 41px; flex: none; border-top: 1px solid #000; background: linear-gradient(90deg, #3a150c, #37170f 60%, #451c12 72%, #3a150d 85%, #3d160e); color: #fff; display: flex; }
.start { width: 48px; display: flex; align-items: center; justify-content: center; }
.tsearch { width: 288px; background: #f3f2f1; border: 1px solid #c8c6c4; display: flex; align-items: center; padding: 0 9px 0 11px; color: #323130; font-size: 14px; letter-spacing: -.03px; }
.tsearch span { margin: 0 auto 0 11px; }
.app { width: 49px; display: flex; align-items: center; justify-content: center; }
.view { width: 48px; } .edge { width: 52px; padding-left: 2px; }
.run { width: 40px; border-bottom: 2px solid #f2a0a8; margin: 0 4px; }
.pbi { width: 48px; margin: 0 5px 0 1px; background: linear-gradient(90deg, #94141b 0 44px, #5c1014 44px 45px, #7a1218 45px); }
.chrome { margin: 0; }
.tray { margin-left: auto; display: flex; align-items: center; height: 40px; letter-spacing: -.3px; }
.sun { width: 20px; height: 20px; border-radius: 50%; background: linear-gradient(160deg, #f6c132, #f2660c); }
.wx { margin-left: 10px; width: 101px; font-size: 13.500px; letter-spacing: -.1px; }
.up { margin-right: 10px; } .lang { margin-left: 9px; width: 36px; }
.clock { text-align: center; line-height: 18px; width: 59px; }
.peek { width: 1px; height: 40px; background: #a08a84; margin: 0 4px 0 5px; }
```
